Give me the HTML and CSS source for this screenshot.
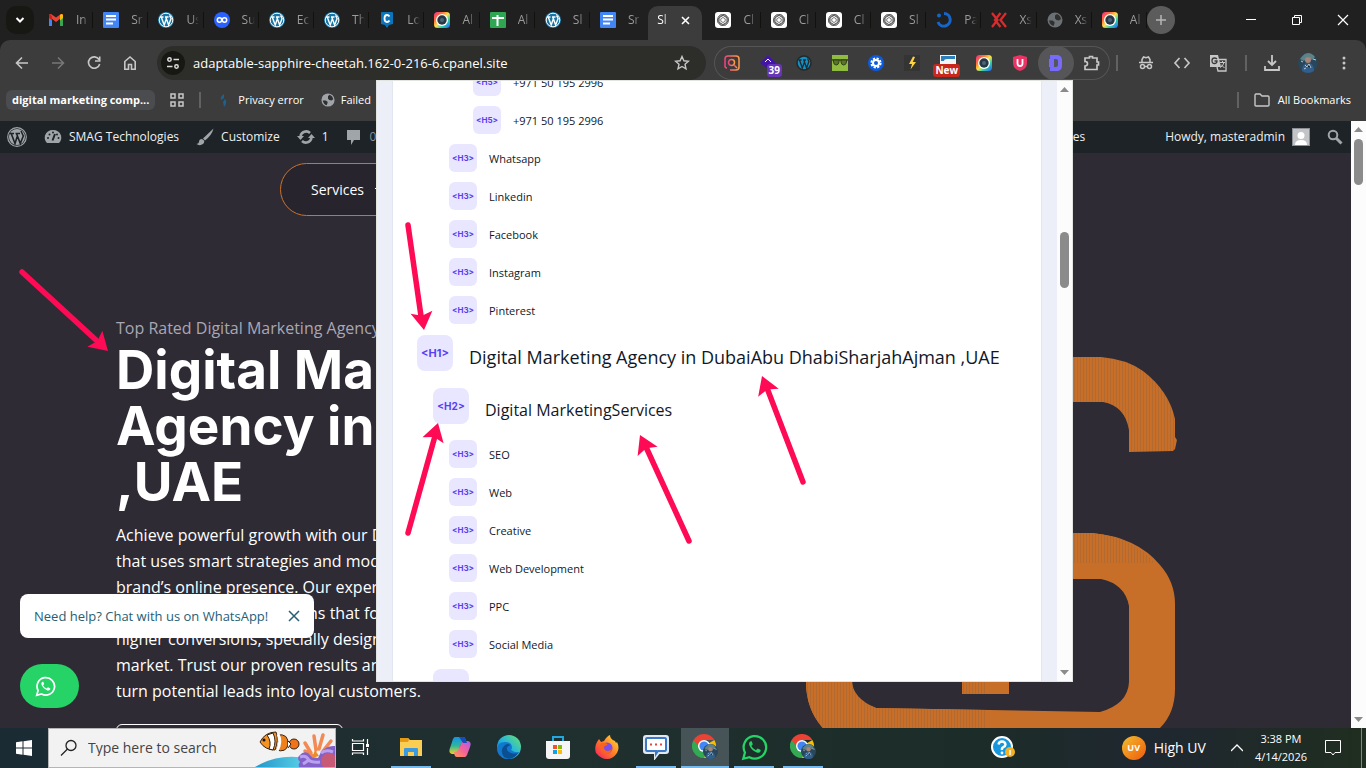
FILE: index.html
```html
<!DOCTYPE html>
<html lang="en">
<head>
<meta charset="utf-8">
<meta name="viewport" content="width=device-width, initial-scale=1">
<title>SMAG Technologies</title>
<link rel="stylesheet" href="styles.css">
</head>
<body>
<svg class="sprite" aria-hidden="true">
  <defs>
    <linearGradient id="rainbow" x1="0" y1="0" x2="1" y2="1"><stop offset="0" stop-color="#f0278c"/><stop offset=".3" stop-color="#ff7a30"/><stop offset=".5" stop-color="#ffe24a"/><stop offset=".7" stop-color="#27d3b0"/><stop offset="1" stop-color="#3457ff"/></linearGradient>
    <linearGradient id="insta" x1="0" y1="0" x2="1" y2="0"><stop offset="0" stop-color="#f0447d"/><stop offset="1" stop-color="#fb9d4b"/></linearGradient>
    <linearGradient id="edge" x1="0" y1="1" x2="1" y2="0"><stop offset="0" stop-color="#0c6cc4"/><stop offset=".5" stop-color="#25b4dd"/><stop offset="1" stop-color="#6be56a"/></linearGradient>
    <linearGradient id="fire" x1="1" y1="0" x2="0" y2="1"><stop offset="0" stop-color="#ffe83f"/><stop offset=".5" stop-color="#ff7b24"/><stop offset="1" stop-color="#f31a63"/></linearGradient>
    <linearGradient id="cop1" x1="0" y1="0" x2="0" y2="1"><stop offset="0" stop-color="#1593e6"/><stop offset=".5" stop-color="#2bb6a0"/><stop offset="1" stop-color="#f2d02a"/></linearGradient>
    <linearGradient id="cop2" x1="1" y1="0" x2="0" y2="1"><stop offset="0" stop-color="#a95bf0"/><stop offset=".5" stop-color="#f3629a"/><stop offset="1" stop-color="#ff9a52"/></linearGradient>
    <linearGradient id="sea" x1="0" y1="0" x2="1" y2="0"><stop offset="0" stop-color="#2496c8"/><stop offset="1" stop-color="#5fd6ea"/></linearGradient>
    <pattern id="hatch" width="3" height="6" patternUnits="userSpaceOnUse"><rect width="3" height="6" fill="#c76f29"/><rect width="1" height="6" fill="#b36a31"/></pattern>
  </defs>
  <symbol id="gmail" viewBox="0 0 16 16"><path d="M1 3.500V14h3V7z" fill="#4285f4"/><path d="M12 7v7h3V3.500z" fill="#34a853"/><path d="M1 4.500 8 10l7-5.500V3q-1.500-2-3.500 0L8 5.500 4.500 3Q2.500 1 1 3z" fill="#ea4335"/><path d="M12 4.500v4L15 6V3q-1-2-3 0z" fill="#fbbc04"/><path d="M1 3v3l3 2.500V4.500L2 2z" fill="#c5221f"/></symbol>
  <symbol id="docs" viewBox="0 0 16 16"><rect width="16" height="16" rx="1" fill="#4285f4"/><path d="M3 4h10M3 7.500h10M3 11.500h7" stroke="#fff" stroke-width="2"/></symbol>
  <symbol id="wp" viewBox="0 0 16 16"><circle cx="8" cy="8" r="8" fill="#1675a5"/><circle cx="8" cy="8" r="6.800" fill="none" stroke="#fff"/><path d="M2 5h3.500M7 5h3.500M3.200 5l3 8L8.300 7M7.800 5l2.800 8 2.500-6.500Q12 4 11.500 3.500" fill="none" stroke="#fff" stroke-width="1.400"/></symbol>
  <symbol id="wpgrey" viewBox="0 0 20 20"><circle cx="10" cy="10" r="9.300" fill="none" stroke="#a0a5aa" stroke-width="1.200"/><circle cx="10" cy="10" r="8" fill="#a0a5aa"/><path d="M2.500 6.500h4.500M8.500 6.500H13M4.200 6.500l3.800 10L10.400 9M9.500 6.500l3.800 10 3-7.500Q15 6 14 4" fill="none" stroke="#1d2327" stroke-width="1.600"/></symbol>
  <symbol id="loop" viewBox="0 0 16 16"><circle cx="8" cy="8" r="8" fill="#2962ff"/><circle cx="5.500" cy="8" r="2.200" fill="none" stroke="#fff" stroke-width="1.500"/><circle cx="10.500" cy="8" r="2.200" fill="none" stroke="#fff" stroke-width="1.500"/></symbol>
  <symbol id="cchat" viewBox="0 0 16 16"><path d="M3 0h10q1 0 1 1v11l-4 1-2 3-2-3-4-1V1q0-1 1-1z" fill="#0b74bb"/><path d="M10.500 4.500Q9.500 3 8 3 5.500 3 5.500 6.500T8 10q1.500 0 2.500-1.500" fill="none" stroke="#fff" stroke-width="1.800"/></symbol>
  <symbol id="ring" viewBox="0 0 16 16"><rect width="16" height="16" rx="3.500" fill="url(#rainbow)"/><circle cx="8" cy="8" r="6" fill="#fff"/><circle cx="8" cy="8" r="4.700" fill="#263746"/><circle cx="8" cy="8" r="2" fill="#4d6478"/></symbol>
  <symbol id="sheets" viewBox="0 0 16 16"><rect width="16" height="16" rx="1" fill="#2fa652"/><path d="M2 6h12M7.500 3v11" stroke="#fff" stroke-width="2"/></symbol>
  <symbol id="gpt" viewBox="0 0 16 16"><rect width="16" height="16" rx="3" fill="#fff"/><g fill="none" stroke="#555" stroke-width=".8"><circle cx="8" cy="8" r="5.600"/><path d="M8 2.400q4 0 4 4v4L8 12.500M12.800 5.200q2 3.500-1.400 5.500L8 12.700 4.500 10.500M12.800 10.800q-2 3.500-5.500 1.500l-3.500-2V6M8 13.600q-4 0-4-4v-4L8 3.500M3.200 10.800q-2-3.500 1.400-5.500L8 3.300l3.500 2.200M3.200 5.200q2-3.500 5.500-1.500l3.500 2V10M5.800 6.800 8 5.500l2.200 1.300v2.500L8 10.500 5.800 9.300z"/></g></symbol>
  <symbol id="arc" viewBox="0 0 16 16"><path d="M8 1.500A6.300 6.300 0 1 1 2 10" fill="none" stroke="#1765c9" stroke-width="3"/><circle cx="3" cy="3.500" r="2" fill="#1765c9"/></symbol>
  <symbol id="xk" viewBox="0 0 16 16"><path d="M1 1l5.500 7L1 15M9.500 1 4 8l5.500 7M15 1 9.500 8l5.500 7" fill="none" stroke="#d92c2c" stroke-width="2.300"/></symbol>
  <symbol id="globe" viewBox="0 0 16 16"><circle cx="8" cy="8" r="7.500" fill="currentColor"/><path d="M2 8.500h3.500l2 1.500v1.500L6.500 14Q3 13 2 8.500zM8 3.500l2-1.500q3.500 1.500 4 5l-2 1.500L9.500 8 8 6.500z" fill="#2f2f2f"/></symbol>
  <symbol id="avatar" viewBox="0 0 20 20"><circle cx="10" cy="10" r="10" fill="#29475a"/><path d="M2 6q4-6 8-6t7 4l-3 3-4-3-4 4z" fill="#5d8288"/><circle cx="10" cy="7" r="3" fill="#a98479"/><path d="M4 18q0-8 6-8t6 8q-6 4-12 0" fill="#315e8c"/><path d="M7 12l2 2 2-3 2 4M3 8l2 1M15 6l3 1M6 16l2-1" stroke="#b9cdd4"/></symbol>
  <symbol id="wa" viewBox="0 0 24 24"><path d="M2 22l1.500-5.500A10 10 0 1 1 7.500 20.600z" fill="none" stroke="currentColor" stroke-width="2"/><path d="M8.500 6.500q-2 1-1 3.800 1.800 4.400 6.500 6.200 2.500.8 3.500-1.500l-.2-1-2.500-1.200-1.600 1.600q-2.700-1.200-4-3.700l1.300-1.600L9.500 6.500z" fill="currentColor"/></symbol>
  <symbol id="chrome" viewBox="0 0 26 26"><path d="M12 12l10.400-6A12 12 0 0 1 12 24z" fill="#fbbc05"/><path d="M12 12 1.600 6A12 12 0 0 0 12 24l4-8z" fill="#34a853"/><path d="M12 6h10.400A12 12 0 0 0 1.600 6L7 13z" fill="#ea4335"/><circle cx="12" cy="12" r="6" fill="#fff"/><circle cx="12" cy="12" r="4.600" fill="#4285f4"/><use href="#avatar" x="11" y="10" width="15" height="15"/></symbol>
</svg>

<header class="browser">
  <div class="tabstrip">
    <button class="tab-search" aria-label="Search tabs"><svg width="10" height="8" viewBox="0 0 10 8"><path d="M1.500 2 5 5.500 8.500 2" fill="none" stroke="#fff" stroke-width="2"/></svg></button>
    <nav class="tabs" aria-label="Tabs">
      <button class="tab"><svg class="fav"><use href="#gmail"/></svg><span>In</span></button>
      <button class="tab"><svg class="fav"><use href="#docs"/></svg><span>Sr</span></button>
      <button class="tab"><svg class="fav"><use href="#wp"/></svg><span>Us</span></button>
      <button class="tab"><svg class="fav"><use href="#loop"/></svg><span>Su</span></button>
      <button class="tab"><svg class="fav"><use href="#wp"/></svg><span>Ec</span></button>
      <button class="tab"><svg class="fav"><use href="#wp"/></svg><span>Th</span></button>
      <button class="tab"><svg class="fav"><use href="#cchat"/></svg><span>Lo</span></button>
      <button class="tab"><svg class="fav"><use href="#ring"/></svg><span>Al</span></button>
      <button class="tab"><svg class="fav"><use href="#sheets"/></svg><span>Al</span></button>
      <button class="tab"><svg class="fav"><use href="#wp"/></svg><span>Sl</span></button>
      <button class="tab before"><svg class="fav"><use href="#docs"/></svg><span>Sr</span></button>
      <button class="tab current"><span>Sl</span><svg width="9" height="9" viewBox="0 0 9 9"><path d="M1 1l7 7M8 1 1 8" stroke="#fff" stroke-width="1.600"/></svg></button>
      <button class="tab"><svg class="fav"><use href="#gpt"/></svg><span>Cl</span></button>
      <button class="tab"><svg class="fav"><use href="#gpt"/></svg><span>Cl</span></button>
      <button class="tab"><svg class="fav"><use href="#gpt"/></svg><span>Cl</span></button>
      <button class="tab"><svg class="fav"><use href="#gpt"/></svg><span>Sl</span></button>
      <button class="tab"><svg class="fav"><use href="#arc"/></svg><span>Pa</span></button>
      <button class="tab"><svg class="fav"><use href="#xk"/></svg><span>Xs</span></button>
      <button class="tab"><svg class="fav dim"><use href="#globe"/></svg><span>Xs</span></button>
      <button class="tab"><svg class="fav"><use href="#ring"/></svg><span>Al</span></button>
    </nav>
    <button class="new-tab" aria-label="New tab"><svg width="12" height="12" viewBox="0 0 12 12"><path d="M6 1v10M1 6h10" stroke="#b5b5b5" stroke-width="1.500"/></svg></button>
    <div class="window-buttons">
      <button aria-label="Minimize"><svg width="12" height="12" viewBox="0 0 12 12"><path d="M1 5.500h10" stroke="#fff"/></svg></button>
      <button aria-label="Restore"><svg width="12" height="12" viewBox="0 0 12 12"><path d="M1.500 3.500h7v7h-7zM3.500 3.500v-2h7v7h-2" fill="none" stroke="#fff"/></svg></button>
      <button aria-label="Close"><svg width="12" height="12" viewBox="0 0 12 12"><path d="M1 1l10 10M11 1 1 11" stroke="#fff" stroke-width="1.200"/></svg></button>
    </div>
  </div>

  <div class="chrome-body">
    <div class="toolbar">
      <div class="nav-buttons">
        <button class="tool" aria-label="Back"><svg width="16" height="16" viewBox="0 0 16 16"><path d="M14 8H3M8 2.500 2.500 8 8 13.500" fill="none" stroke="#c7c7c7" stroke-width="1.600"/></svg></button>
        <button class="tool" aria-label="Forward"><svg width="16" height="16" viewBox="0 0 16 16"><path d="M2 8h11M8 2.500 13.500 8 8 13.500" fill="none" stroke="#777" stroke-width="1.600"/></svg></button>
        <button class="tool" aria-label="Reload"><svg width="16" height="16" viewBox="0 0 16 16"><path d="M13 4.500A5.700 5.700 0 1 0 13.700 9M13.700 1.500V6H9" fill="none" stroke="#c7c7c7" stroke-width="1.600"/></svg></button>
        <button class="tool" aria-label="Home"><svg width="16" height="16" viewBox="0 0 16 16"><path d="M2.800 14.200V6.500L8 2l5.200 4.500v7.700H9.500V9.500h-3v4.700z" fill="none" stroke="#c7c7c7" stroke-width="1.600"/></svg></button>
      </div>
      <div class="omnibox">
        <button class="site-info" aria-label="Site information"><svg width="14" height="14" viewBox="0 0 14 14" fill="none" stroke="#ddd" stroke-width="1.500"><circle cx="3.500" cy="3.500" r="1.700"/><path d="M7.500 3.500H13M1 10.500h5.500"/><circle cx="10.500" cy="10.500" r="1.700"/></svg></button>
        <input type="text" class="url" aria-label="Address" value="adaptable-sapphire-cheetah.162-0-216-6.cpanel.site">
        <button class="plain" aria-label="Bookmark"><svg width="16" height="16" viewBox="0 0 16 16"><path d="M8 1.500l1.900 4.300 4.600.4-3.500 3.100 1 4.600L8 11.500l-4 2.400 1-4.600L1.500 6.200l4.600-.4z" fill="none" stroke="#c7c7c7" stroke-width="1.400"/></svg></button>
      </div>
      <div class="extensions">
        <button class="tool" aria-label="Finder"><svg width="16" height="16" viewBox="0 0 16 16" fill="none" stroke="url(#insta)" stroke-width="1.500"><path d="M3 13q-2 0-2-2V4q0-3 3-3h8q3 0 3 3v8q0 3-3 3H6"/><circle cx="7.500" cy="7.500" r="3"/><path d="M10 10l3 3"/></svg></button>
        <button class="tool" aria-label="39 items"><svg width="18" height="18" viewBox="0 0 18 18"><path d="M1 9 9 1l8 8-8 6z" fill="#4414a8"/><path d="M6 8l3-3 3 3" stroke="#fff" fill="none"/></svg><span class="count">39</span></button>
        <button class="tool" aria-label="WordPress"><svg width="16" height="16" viewBox="0 0 16 16"><circle cx="8" cy="8" r="7" fill="#1490c2" stroke="#24282b" stroke-width="1.500"/><path d="M2.500 5h3M7 5h3M3.500 5l2.800 8L8.300 7.500M7.800 5l2.800 8 2.300-6.500Q12 4.500 11.500 3.500" fill="none" stroke="#24282b" stroke-width="1.300"/></svg></button>
        <button class="tool" aria-label="Glasses"><svg width="16" height="16" viewBox="0 0 16 16"><rect width="16" height="16" fill="#8fbc3f"/><path d="M0 5h16" stroke="#354115" stroke-width="1.500"/><path d="M1.500 5h5.500v2q-.5 3-2.800 3T1.500 7zM9 5h5.500v2q-.5 3-2.800 3T9 7z" fill="#5a7429" stroke="#34401a"/></svg></button>
        <button class="tool" aria-label="Gear"><svg width="16" height="16" viewBox="0 0 16 16"><circle cx="8" cy="8" r="8" fill="#0b5be0"/><circle cx="8" cy="8" r="4.600" fill="none" stroke="#fff" stroke-width="2" stroke-dasharray="2.200 1.412"/><circle cx="8" cy="8" r="3" fill="none" stroke="#fff" stroke-width="2"/></svg></button>
        <button class="tool" aria-label="Lightning"><svg width="16" height="16" viewBox="0 0 16 16"><rect width="16" height="16" fill="#343434"/><path d="M9 1.500 5 9h3l-1.500 5.500L12 7H8.800L11 2z" fill="#ffd33c"/></svg></button>
        <button class="tool" aria-label="New item"><svg width="16" height="16" viewBox="0 0 16 16"><rect width="16" height="16" fill="#f2f4f6"/><path d="M1 1h14v3H7q-3 0-3 2H1z" fill="#2c7fb9"/></svg><span class="count new">New</span></button>
        <button class="tool" aria-label="Camera"><svg width="16" height="16"><use href="#ring"/></svg></button>
        <button class="tool" aria-label="Shield"><svg width="16" height="16" viewBox="0 0 16 16"><path d="M8 0l7 2v6q0 6-7 8-7-2-7-8V2z" fill="#e93465"/><path d="M5.500 4v4.500q0 2.500 2.500 2.500t2.500-2.500V4" fill="none" stroke="#fff" stroke-width="1.800"/></svg></button>
        <button class="tool pressed" aria-label="Detailed headings"><svg width="16" height="16" viewBox="0 0 16 16"><path fill-rule="evenodd" d="M2 0h8q4 1 4 5v6q0 4-4 5H2v-4H1V4h1zM6 4v8h2q2 0 2-2V6q0-2-2-2z" fill="#766bfb"/></svg></button>
        <button class="tool" aria-label="Extensions"><svg width="18" height="18" viewBox="0 0 18 18"><path d="M2 4h4.500V2.500h3V4H14v4h1.500v3H14v4.500H2V12q2.500 0 2.500-2.300T2 7.500z" fill="none" stroke="#c7c7c7" stroke-width="1.700"/></svg></button>
      </div>
      <div class="right-tools">
        <i class="rule"></i>
        <button class="tool" aria-label="Incognito"><svg width="16" height="16" viewBox="0 0 16 16" fill="none" stroke="#c7c7c7" stroke-width="1.500"><path d="M1 7.500h14M4 7V4.500L5.500 2l2.500.8 2.500-.8L12 4.500V7"/><circle cx="4.500" cy="11.500" r="2"/><circle cx="11.500" cy="11.500" r="2"/><path d="M6.500 11.500h3"/></svg></button>
        <button class="tool" aria-label="Source"><svg width="18" height="16" viewBox="0 0 18 16"><path d="M6.500 3 2 8l4.500 5M11.500 3 16 8l-4.500 5" fill="none" stroke="#c7c7c7" stroke-width="1.700"/></svg></button>
        <button class="tool" aria-label="Translate"><svg width="18" height="18" viewBox="0 0 18 18"><path d="M1 1h8l3 12H1z" fill="#c7c7c7"/><path d="M8 5.500h9V17H9l-1-4" fill="none" stroke="#c7c7c7" stroke-width="1.300"/><path d="M8 5Q7 4 5.500 4 3 4 3 6.800T5.500 9.500Q8 9.500 8 7H5.500" fill="none" stroke="#3c3c3c" stroke-width="1.300"/><path d="M11 8.500h5M13.500 7v1.500M15 8.500q-1 4-4 5M12 10.500l3.500 3.500" fill="none" stroke="#c7c7c7"/></svg></button>
        <i class="rule"></i>
        <button class="tool" aria-label="Downloads"><svg width="18" height="18" viewBox="0 0 18 18"><path d="M9 1v10M5 7l4 4 4-4M2 12v4h14v-4" fill="none" stroke="#c7c7c7" stroke-width="1.800"/></svg></button>
        <button class="tool" aria-label="Profile"><svg width="20" height="20"><use href="#avatar"/></svg></button>
        <button class="tool" aria-label="Menu"><svg width="4" height="16" viewBox="0 0 4 16" fill="#c7c7c7"><circle cx="2" cy="3" r="1.500"/><circle cx="2" cy="8" r="1.500"/><circle cx="2" cy="13" r="1.500"/></svg></button>
      </div>
    </div>
    <div class="bookmarks">
      <button class="chip">digital marketing comp...</button>
      <button class="plain" aria-label="Apps"><svg width="14" height="14" viewBox="0 0 14 14"><path d="M1 1h4v4H1zM9 1h4v4H9zM1 9h4v4H1zM9 9h4v4H9z" fill="none" stroke="#c7c7c7" stroke-width="1.500"/></svg></button>
      <i class="rule"></i>
      <a href="#" class="bookmark"><svg width="16" height="16" viewBox="0 0 16 16"><path d="M8 2Q4 4 5 8l3-2zM9 7q3 3-1 8l-1-5" fill="#1d618c"/></svg>Privacy error</a>
      <a href="#" class="bookmark"><svg width="14" height="14" class="globe"><use href="#globe"/></svg>Failed</a>
      <a href="#" class="bookmark all"><i class="rule"></i><svg width="16" height="14" viewBox="0 0 16 14"><path d="M1 2.500Q1 1 2 1h4l2 2h6q1 0 1 1v8q0 1-1 1H2q-1 0-1-1z" fill="none" stroke="#c7c7c7" stroke-width="1.400"/></svg>All Bookmarks</a>
    </div>
  </div>
</header>

<main class="viewport">
  <div class="site">
    <nav class="adminbar" aria-label="Admin">
      <a href="#" aria-label="WordPress"><svg width="20" height="20"><use href="#wpgrey"/></svg></a>
      <a href="#"><svg width="18" height="18" viewBox="0 0 18 18"><path d="M3 15Q0 12 1 7.500 3 2 9 2t8 5.500Q18 12 15 15z" fill="#a0a5aa"/><path d="M8.500 12.500 11 6" stroke="#1d2327" stroke-width="2"/><g fill="#1d2327"><circle cx="4" cy="10" r="1"/><circle cx="5.500" cy="6.500" r="1"/><circle cx="9" cy="4.500" r="1"/><circle cx="13" cy="6.500" r="1"/><circle cx="14.500" cy="10" r="1"/></g></svg>SMAG Technologies</a>
      <a href="#"><svg width="18" height="18" viewBox="0 0 18 18"><path d="M17.500.5 7 10.500l2 2Q16 7 17.500.5zM6 11q-3 0-3 3 0 1.500-2.500 2Q3 18 6 16.500t2-4z" fill="#a0a5aa"/></svg>Customize</a>
      <a href="#"><svg width="18" height="18" viewBox="0 0 18 18"><path d="M3.500 8A5.700 5.700 0 0 1 13 5M14.500 10A5.700 5.700 0 0 1 5 13" fill="none" stroke="#a0a5aa" stroke-width="2.600"/><path d="M0 8h7l-3.500 4zM18 10h-7l3.500-4z" fill="#a0a5aa"/></svg>1</a>
      <a href="#" class="muted"><svg width="15" height="16" viewBox="0 0 15 16"><path d="M1 1h13v10H8l-3 5v-5H1z" fill="#a0a5aa"/></svg>0</a>
      <a href="#" class="last">Services</a>
      <a href="#" class="howdy">Howdy, masteradmin<svg width="18" height="18" viewBox="0 0 18 18"><rect x=".5" y=".5" width="17" height="17" fill="#c3c4c7" stroke="#8c8f94"/><circle cx="9" cy="7.500" r="3.500" fill="#fff"/><path d="M3 17q0-5 6-5t6 5z" fill="#fff"/></svg></a>
      <a href="#" class="find" aria-label="Search"><svg width="16" height="16" viewBox="0 0 16 16"><circle cx="6" cy="6" r="4.300" fill="none" stroke="#a0a5aa" stroke-width="2"/><path d="M9 9l5.500 5.500" stroke="#a0a5aa" stroke-width="3"/></svg></a>
    </nav>
    <nav class="site-menu" aria-label="Site"><a href="#">Services</a><svg width="8" height="6" viewBox="0 0 8 6"><path d="M1 1l3 3 3-3" fill="none" stroke="#fff"/></svg></nav>
    <section class="hero">
      <div class="copy">
        <p class="eyebrow">Top Rated Digital Marketing Agency</p>
        <h1 class="title">Digital Ma<br>Agency in<br>,UAE</h1>
        <p class="lead">Achieve powerful growth with our D<br>that uses smart strategies and mod<br>brand’s online presence. Our exper<br>builds marketing campaigns that fo<br>higher conversions, specially design<br>market. Trust our proven results and<br>turn potential leads into loyal customers.</p>
        <a href="#" class="cta" aria-label="Get started"></a>
      </div>
      <svg class="emblem" width="372" height="390" viewBox="806 350 372 390" aria-hidden="true">
        <path d="M1000 357h101q25 2 42 14 26 20 32 48v18l2 3-2 9-2 2-44 1v-22q-4-24-26-28H1000z" fill="url(#hatch)"/>
        <path fill-rule="evenodd" d="M880 533h212q45 4 68 32 15 17 15 39v85q0 24-15 39l-12 12H836q-30-22-30-58v-78q0-56 74-71zM880 579q-28 8-28 40v62q0 20 22 26l2 1 224 4q28-8 29-30v-76q-4-22-28-27z" fill="#c76f29"/>
        <path d="M990 533h102q38 3 63 30H990zM806 660h46v20q0 18 24 28l111 2v30H836q-30-22-30-58z" fill="url(#hatch)"/>
        <path d="M962 660h47v34h-47z" fill="#c76f29"/><path d="M962 660h25v34h-25z" fill="url(#hatch)"/>
      </svg>
    </section>
    <aside class="chat">
      <div class="bubble">Need help? Chat with us on WhatsApp!<button class="plain" aria-label="Close"><svg width="12" height="12" viewBox="0 0 12 12"><path d="M1 1l10 10M11 1 1 11" stroke="#255e75" stroke-width="1.500"/></svg></button></div>
      <button class="wa-button" aria-label="WhatsApp"><svg width="21" height="21"><use href="#wa"/></svg></button>
    </aside>
  </div>
  <div class="scrollbar"><svg width="9" height="5" viewBox="0 0 9 5"><path d="M0 5l4.500-5L9 5z" fill="#8b8b8b"/></svg><span class="thumb"></span><svg class="down" width="9" height="5" viewBox="0 0 9 5"><path d="M0 0l4.500 5L9 0z" fill="#8b8b8b"/></svg></div>
</main>

<section class="popup" aria-label="Headings">
  <div class="popup-scroll">
    <ul class="outline">
      <li class="row h5"><b>&lt;H5&gt;</b><span>+971 50 195 2996</span></li>
      <li class="row h5"><b>&lt;H5&gt;</b><span>+971 50 195 2996</span></li>
      <li class="row h3"><b>&lt;H3&gt;</b><span>Whatsapp</span></li>
      <li class="row h3"><b>&lt;H3&gt;</b><span>Linkedin</span></li>
      <li class="row h3"><b>&lt;H3&gt;</b><span>Facebook</span></li>
      <li class="row h3"><b>&lt;H3&gt;</b><span>Instagram</span></li>
      <li class="row h3"><b>&lt;H3&gt;</b><span>Pinterest</span></li>
      <li class="row h1"><b>&lt;H1&gt;</b><span>Digital Marketing Agency in DubaiAbu DhabiSharjahAjman ,UAE</span></li>
      <li class="row h2"><b>&lt;H2&gt;</b><span>Digital MarketingServices</span></li>
      <li class="row h3"><b>&lt;H3&gt;</b><span>SEO</span></li>
      <li class="row h3"><b>&lt;H3&gt;</b><span>Web</span></li>
      <li class="row h3"><b>&lt;H3&gt;</b><span>Creative</span></li>
      <li class="row h3"><b>&lt;H3&gt;</b><span>Web Development</span></li>
      <li class="row h3"><b>&lt;H3&gt;</b><span>PPC</span></li>
      <li class="row h3"><b>&lt;H3&gt;</b><span>Social Media</span></li>
      <li class="row h2"><b></b></li>
    </ul>
  </div>
  <div class="scrollbar"><svg width="9" height="5" viewBox="0 0 9 5"><path d="M0 5l4.500-5L9 5z" fill="#8b8b8b"/></svg><span class="thumb"></span><svg class="down" width="9" height="5" viewBox="0 0 9 5"><path d="M0 0l4.500 5L9 0z" fill="#8b8b8b"/></svg></div>
</section>

<svg class="arrows" width="1366" height="768" viewBox="0 0 1366 768" aria-hidden="true">
  <g stroke="#ff0a54" stroke-width="5.500" stroke-linecap="round"><path d="M22 272l74 68M408 225l13 91M408 533l27-97M689 541l-43-94M803 482l-36-94"/></g>
  <g fill="#ff0a54">
    <path transform="translate(108 351) rotate(133)" d="M0 0l11 18-11-3.500L-11 18z"/>
    <path transform="translate(424 330) rotate(172)" d="M0 0l11 18-11-3.500L-11 18z"/>
    <path transform="translate(438 423) rotate(16)" d="M0 0l11 18-11-3.500L-11 18z"/>
    <path transform="translate(640 435) rotate(-25)" d="M0 0l11 18-11-3.500L-11 18z"/>
    <path transform="translate(762 376) rotate(-21)" d="M0 0l11 18-11-3.500L-11 18z"/>
  </g>
</svg>

<footer class="taskbar">
  <button class="start" aria-label="Start"><svg width="16" height="16" viewBox="0 0 16 16"><path d="M0 2.200 6.500 1.300v6.200H0zM7.500 1.200 16 0v7.500H7.500zM0 8.500h6.500v6.200L0 13.800zM7.500 8.500H16V16l-8.500-1.200z" fill="#fff"/></svg></button>
  <label class="search"><svg width="18" height="18" viewBox="0 0 18 18"><circle cx="11" cy="6.500" r="5" fill="none" stroke="#222" stroke-width="1.300"/><path d="M7.500 10 1 16.500" stroke="#222" stroke-width="1.300"/></svg><input type="text" placeholder="Type here to search" aria-label="Search">
    <svg class="reef" width="80" height="38" viewBox="0 0 80 38"><path d="M0 38q25-15 55-8v8z" fill="url(#sea)"/><path d="M50 14l6 10M59 7l2 14M68 6l-4 14M76 12l-8 10M50 22l8 5" stroke="#f28a54" stroke-width="3.500" stroke-linecap="round"/><path d="M44 38q-1-3 1-5-4-4 0-7 3-4 8-2l4 4 6 1 3-6q6-7 14-6v21z" fill="#8262c9"/><path d="M45 28q6-2 8 2t12 3M66 24q5-4 12-1M48 35l6-4" stroke="#bba0ef" stroke-width="3" fill="none"/><path d="M57 29l3-8 4 6" fill="#ef8b23"/><circle cx="74" cy="32" r="8" fill="#c75a77"/><path d="M5 13q5-10 16-10 3 8-1 18Q10 21 5 13z" fill="#f49320" stroke="#3a2410"/><path d="M12 6q5 7 2 14l4 1q4-9 0-17z" fill="#fff" stroke="#352010"/><path d="M22 6q12-2 11 10-2 8-12 5 5-7 1-15z" fill="#ef811b" stroke="#352010"/><path d="M23 5q4 8-1 17" fill="none" stroke="#fff" stroke-width="3"/><circle cx="39" cy="15" r="5" fill="#f0741b" stroke="#352010"/><path d="M33 12l3 3-3 4" fill="#fff" stroke="#352010"/><circle cx="9" cy="11" r="1.500" fill="#111"/></svg>
  </label>
  <div class="apps">
    <button class="task-view" aria-label="Task view"><svg width="18" height="18" viewBox="0 0 18 18"><path d="M1.500 5.500h11v7h-11zM1.500 1v2h11V1M1.500 17v-2h11v2M16.500 1v5M16.500 10v7" fill="none" stroke="#fff" stroke-width="1.200"/><rect x="15" y="6" width="3" height="3" fill="#fff"/></svg></button>
    <button class="open" aria-label="File Explorer"><svg width="24" height="24" viewBox="0 0 24 24"><path d="M1 3h8l2 2h12v16H1z" fill="#fccd53"/><path d="M1 3h8l1 2-1 2H1z" fill="#e49a12"/><path d="M5 21v-7q0-1 1-1h12q1 0 1 1v7h-4v-4H9v4z" fill="#3b99df"/></svg></button>
    <button aria-label="Copilot"><svg width="24" height="24" viewBox="0 0 24 24"><path d="M7 2h8q2 0 2.500 2L19 8h-4q-2 0-3 3l-2 6q-1 2-3 2H4q-4-1-2-6l3-9q1-2 2-2z" fill="url(#cop1)"/><path d="M17 22H9q-2 0-2.500-2L6 17q3 0 4-2l3-6q1-3 4-3h3q4 1 2 6l-3 8q-1 2-2 2z" fill="url(#cop2)"/><path d="M11 2h4q2 0 2.500 2L19 8h-4z" fill="#194bbd"/></svg></button>
    <button aria-label="Edge"><svg width="24" height="24" viewBox="0 0 24 24"><circle cx="12" cy="12" r="12" fill="url(#edge)"/><path d="M0 13Q1 7 8 7t7 6l-1 2q4 3 8 2-5 8-13 7Q0 22 0 13z" fill="#1178cf"/><path d="M8 10q-6 5-1 12 8 5 15-5-3 3-8 1t-4-5q0-2 2-2l1-1q-2-2-5 0z" fill="#0c4f91"/></svg></button>
    <button aria-label="Store"><svg width="24" height="24" viewBox="0 0 24 24"><path d="M7 7V2h10v5" fill="none" stroke="#24a7e0" stroke-width="2"/><path d="M0 6h24v15q0 3-3 3H3q-3 0-3-3z" fill="#f5f5f5"/><path d="M7 10h4v4H7z" fill="#f35325"/><path d="M12 10h4v4h-4z" fill="#81bc06"/><path d="M7 15h4v4H7z" fill="#05a6f0"/><path d="M12 15h4v4h-4z" fill="#ffba08"/></svg></button>
    <button aria-label="Firefox"><svg width="24" height="24" viewBox="0 0 24 24"><path d="M2 7l2-3 2 3 3-1q3-5 6-6 0 4 5 6l1 2 1-1q3 6 0 11-4 6-10 6T1 18Q-1 12 2 7z" fill="url(#fire)"/><circle cx="12" cy="13" r="5.500" fill="#7a4ee8"/><path d="M5 9q5-3 8 1-3 0-4 2t3 4q4 0 5-3-1 6-6 6-6-1-6-10z" fill="#f9631f"/></svg></button>
    <button class="open" aria-label="Messages"><svg width="26" height="26" viewBox="0 0 26 26"><path d="M3 2h20q2 0 2 2v13q0 2-2 2h-7l-4 5v-5H3q-2 0-2-2V4q0-2 2-2z" fill="#fff" stroke="#dfe8f3" stroke-width="2"/><path d="M4 4h18q1 0 1 1v11q0 1-1 1h-7l-2 3v-3H4q-1 0-1-1V5q0-1 1-1z" fill="none" stroke="#3b79c6" stroke-width="2"/><path d="M7 10.500h2M12 10.500h2M17 10.500h2" stroke="#df4747" stroke-width="2"/></svg></button>
    <button class="open focus" aria-label="Chrome"><svg width="26" height="26"><use href="#chrome"/></svg></button>
    <button class="open green" aria-label="WhatsApp"><svg width="27" height="27"><use href="#wa"/></svg></button>
    <button class="open" aria-label="Chrome profile"><svg width="26" height="26"><use href="#chrome"/></svg></button>
  </div>
  <div class="tray">
    <button class="help" aria-label="Help"><svg width="24" height="24" viewBox="0 0 24 24"><circle cx="11" cy="11" r="10" fill="#1796dc" stroke="#fff" stroke-width="2"/><path d="M7.500 8.500Q8 5.500 11 5.500t3.500 3q0 1.500-2 2.500t-1.500 3" fill="none" stroke="#fff" stroke-width="2.400"/><circle cx="11" cy="17" r="1.400" fill="#fff"/><circle cx="19" cy="16" r="5" fill="#f5b121"/><path d="M19 14v5" stroke="#fff" stroke-width="1.500"/></svg></button>
    <button class="weather"><span class="uv">UV</span>High UV</button>
    <button class="plain" aria-label="Hidden icons"><svg width="12" height="8" viewBox="0 0 12 8"><path d="M0 7l6-6 6 6" fill="none" stroke="#fff" stroke-width="1.300"/></svg></button>
    <button class="clock">3:38 PM<br>4/14/2026</button>
    <button class="plain notes" aria-label="Notifications"><svg width="16" height="16" viewBox="0 0 16 16"><path d="M.5.500h15v12H10L8 15l-2-2.500H.5z" fill="none" stroke="#fff"/></svg></button>
  </div>
  <button class="peek" aria-label="Show desktop"></button>
</footer>
</body>
</html>
```
FILE: styles.css
```css
* { box-sizing: border-box; }

body {
  margin: 0;
  height: 100vh;
  display: flex;
  flex-direction: column;
  position: relative;
  overflow: hidden;
  background: #202020;
  color: #fff;
  font: 12px/16px "Open Sans", "Noto Sans", sans-serif;
}

button { border: 0; padding: 0; background: none; color: inherit; font: inherit; }
button, a { display: flex; align-items: center; justify-content: center; }
a { color: inherit; text-decoration: none; }
input { border: 0; padding: 0; background: none; color: inherit; font: inherit; outline: none; min-width: 0; }
svg { display: block; flex: none; }
.sprite { position: absolute; width: 0; height: 0; }

/* Tab strip */
.tabstrip { display: flex; align-items: center; height: 40px; padding-left: 6px; background: #202020; }
.tab-search { width: 28px; height: 28px; border-radius: 10px; background: #171813; margin-right: 4px; }
.tabs { flex: 1; display: flex; align-items: flex-end; height: 40px; min-width: 0; }
.tab { flex: 1 1 0; justify-content: flex-start; gap: 12px; height: 40px; padding: 0 0 0 10px; min-width: 0; position: relative; color: #9b9b9b; }
.tab span { width: 16px; text-align: left; white-space: nowrap; mask-image: linear-gradient(90deg, #000 40%, transparent 80%); }
.tab::after { content: ""; position: absolute; right: 0; top: 12px; width: 1px; height: 16px; background: #11110d; }
.tab.before::after, .tab.current::after { display: none; }
.fav { width: 16px; height: 16px; }
.dim { color: #6b7075; }
.tab.current { height: 34px; margin: 0 3px; gap: 8px; padding: 0 0 6px 9px; border-radius: 10px 10px 0 0; background: #3c3c3c; color: #fff; }
.new-tab { width: 28px; height: 28px; border-radius: 14px; background: #5c5c5c; }
.window-buttons { display: flex; margin-left: 53px; }
.window-buttons button { width: 46px; height: 40px; }

/* Toolbar */
.chrome-body { background: #3c3c3c; border-radius: 10px 10px 0 0; height: 81px; }
.toolbar { display: flex; align-items: center; height: 46px; padding: 0 4px; }
.nav-buttons, .right-tools, .extensions { display: flex; align-items: center; }
.tool { width: 36px; height: 34px; position: relative; }
.omnibox { flex: 1; display: flex; align-items: center; height: 34px; margin: 0 8px 0 9px; padding: 0 16px 0 4px; border-radius: 17px; background: #2d2e29; }
.site-info { width: 24px; height: 24px; border-radius: 12px; background: #171813; }
.url { flex: 1; margin-left: 8px; font-size: 13px; }
.extensions { box-shadow: inset 0 0 0 1px #555; border-radius: 17px; height: 34px; margin-right: 6px; }
.pressed { border-radius: 17px; background: #565658; }
.count { position: absolute; right: 4px; bottom: 3px; padding: 0 2px; border-radius: 3px; background: #6735b8; font-size: 10px; line-height: 13px; font-weight: 700; }
.count.new { right: 6px; background: #c9261c; }
.rule { width: 2px; height: 16px; background: #626262; }
.right-tools .rule + .tool { margin-left: 10px; }
.right-tools .tool + .rule { margin-left: 9px; }
.right-tools .rule + .tool:nth-child(6) { margin-left: 7px; }

/* Bookmarks */
.bookmarks { display: flex; align-items: center; height: 28px; padding: 0 15px 0 6px; gap: 15px; }
.chip { height: 20px; padding: 0 6px; border-radius: 6px; background: #4b4c4f; font-size: 11px; font-weight: 700; white-space: nowrap; }
.bookmark { gap: 6px; white-space: nowrap; font-size: 11px; }
.bookmark.all { margin-left: auto; gap: 8px; }
.bookmark.all .rule { margin-right: 7px; }
.globe { color: #a0a4aa; margin-left: 2px; }

/* Web page */
.viewport { flex: 1; display: flex; min-height: 0; }
.site { flex: 1; min-width: 0; position: relative; overflow: hidden; background: #2e2b35; }
.scrollbar { width: 15px; display: flex; flex-direction: column; align-items: center; padding: 6px 0; background: #fcfcfc; }
.scrollbar .thumb { width: 9px; height: 46px; margin-top: 7px; border-radius: 5px; background: #8b8b8b; }
.scrollbar .down { margin-top: auto; }

.adminbar { display: flex; align-items: center; height: 32px; padding: 0 8px 0 7px; background: #1d2327; color: #f0f0f1; font-size: 12px; }
.adminbar a { gap: 7px; margin-right: 17px; white-space: nowrap; }
.adminbar .muted { color: #8c8f94; gap: 9px; }
.adminbar .last { margin: 0 80px 0 auto; }
.adminbar .find { margin-right: 0; }

.site-menu { display: flex; align-items: center; gap: 10px; height: 53px; margin: 10px 280px 0; padding-left: 30px; border: 1px solid #c9732b; border-radius: 27px; background: #27242d; font-size: 14px; }
.hero { display: flex; justify-content: space-between; align-items: flex-start; padding: 100px 173px 0 116px; }
.copy { width: 340px; white-space: nowrap; }
.copy p, .title { margin: 0; }
.eyebrow { font-size: 16px; line-height: 24px; color: #a9a7b3; }
.title { padding-top: 2px; font: 700 53px/56px Inter, sans-serif; }
.copy .lead { margin-top: 12px; font-size: 16px; line-height: 26px; }
.cta { width: 227px; height: 48px; margin-top: 20px; border: 1px solid #fff; border-radius: 6px; }
.emblem { margin-top: 34px; }

.chat { position: absolute; left: 20px; bottom: 20px; }
.bubble { display: flex; align-items: center; gap: 20px; height: 44px; margin-bottom: 26px; padding: 0 14px; border-radius: 8px; background: #fff; color: #255e75; font-size: 13px; }
.wa-button { width: 59px; height: 44px; padding-right: 8px; border-radius: 22px; background: #25d366; color: #fff; }

.plain { flex: none; }

/* Extension popup */
.popup { position: absolute; top: 80px; right: 293px; width: 697px; height: 602px; display: flex; overflow: hidden; border: 1px solid #e1e4e1; background: #eceef8; color: #101828; }
.popup-scroll { flex: 1; padding: 0 15px; overflow: hidden; }
.outline { list-style: none; margin: -18px 0 0; padding: 0 24px; border: 1px solid #e3e5f1; border-width: 0 1px; background: #fff; }
.row { display: flex; align-items: center; gap: 12px; height: 38px; white-space: nowrap; font-size: 11px; line-height: 16px; }
.row b { flex: none; display: flex; align-items: center; justify-content: center; width: 28px; height: 28px; border-radius: 6px; background: #e9e6ff; color: #583ff5; font: 700 8px/10px Inter, sans-serif; }
.row span { padding-top: 2px; }
.h3 { padding-left: 32px; }
.h5 { padding-left: 56px; }
.h1, .h2 { height: 53px; gap: 16px; padding-bottom: 5px; font-size: 18px; line-height: 26px; }
.h1 b, .h2 b { width: 36px; height: 36px; border-radius: 8px; font-size: 11px; line-height: 14px; }
.h1 span, .h2 span { padding-top: 8px; }
.h2 { padding-left: 16px; font-size: 16px; }
.h2 b { font-size: 10px; }
.popup .thumb { height: 56px; margin-top: 140px; }

.arrows { position: absolute; left: 0; top: 0; pointer-events: none; }

/* Taskbar */
.taskbar { display: flex; height: 40px; background: linear-gradient(90deg, #1b2b34, #20302f 40%, #1c2c28 72%, #1f2730 85%, #1f2e20); }
.start { width: 48px; }
.search { display: flex; align-items: center; width: 288px; padding-left: 11px; border: 1px solid #b5b5b5; background: #f2f2f2; color: #222; }
.search input { flex: 1; margin-left: 10px; font-size: 14px; }
.search input::placeholder { color: #444; opacity: 1; }
.apps { display: flex; }
.apps button { width: 48px; margin-right: 1px; border-bottom: 2px solid transparent; position: relative; }
.apps .task-view { margin-right: 3px; }
.apps .open::after { content: ""; position: absolute; left: 4px; right: 4px; bottom: -2px; height: 2px; background: #76b9ed; }
.apps .focus { background: #465457; }
.apps .focus::after { left: 0; right: 0; }
.green { color: #25d366; }
.tray { flex: 1; display: flex; align-items: center; justify-content: flex-end; padding-right: 20px; }
.peek { width: 5px; border-left: 1px solid #7d8784; }
.help { margin-right: 107px; }
.weather { gap: 8px; margin-right: 25px; font-size: 14px; white-space: nowrap; }
.uv { width: 24px; height: 24px; border-radius: 12px; background: linear-gradient(135deg, #f3bd2e, #ef5a0c); font-size: 9px; line-height: 24px; font-weight: 700; text-align: center; }
.clock { margin: 0 18px 0 12px; text-align: center; font-size: 11px; line-height: 18px; }
```
